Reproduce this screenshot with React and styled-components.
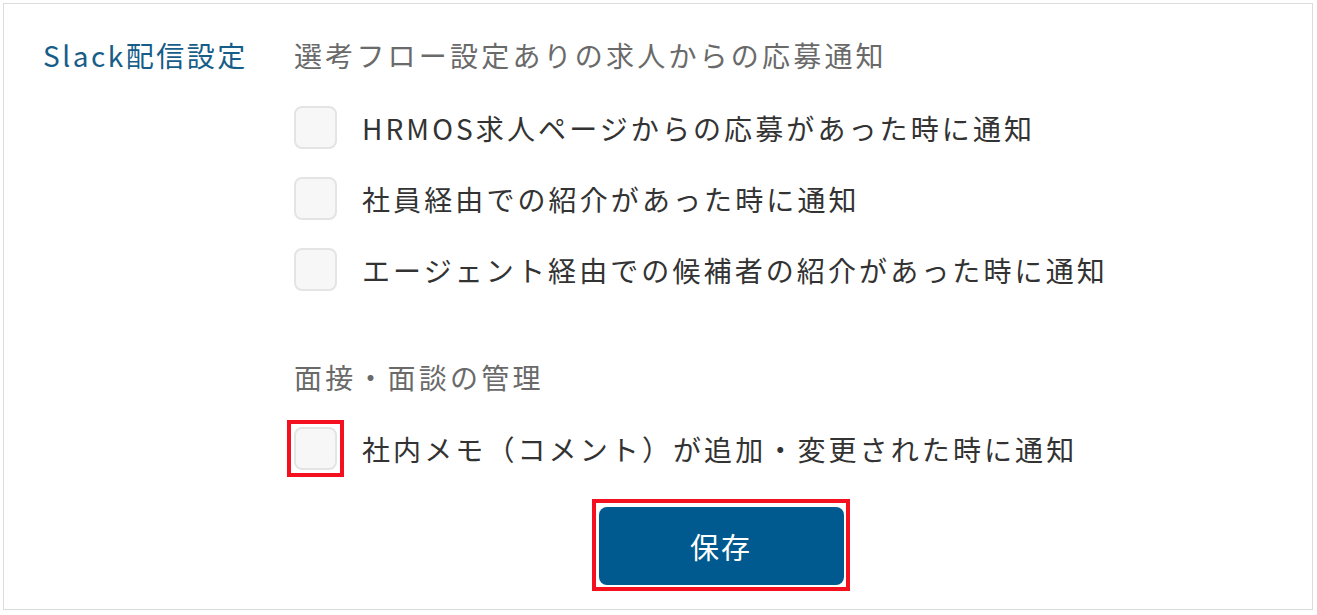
import React from "react";
import styled, { createGlobalStyle } from "styled-components";

const GlobalStyle = createGlobalStyle`
  html, body { margin: 0; padding: 0; background: #ffffff; }
  body { font-family: "Noto Sans CJK JP", "Noto Sans", sans-serif; }
`;

const Page = styled.div`
  padding: 3px 4px 0 3px;
  width: 1317px;
  box-sizing: border-box;
`;

const Panel = styled.section`
  border: 1px solid #dcdcdc;
  display: grid;
  grid-template-columns: 251px 853px;
  padding: 31px 0 24px 39px;
  height: 607px;
  box-sizing: border-box;
`;

const Label = styled.div`
  color: #175d88;
  font-size: 28px;
  line-height: 40px;
  letter-spacing: 2.5px;
  white-space: nowrap;
`;

const Content = styled.div`
  display: flex;
  flex-direction: column;
`;

const GroupTitle = styled.div`
  color: #6a6a6a;
  font-size: 28px;
  line-height: 40px;
  letter-spacing: 3.2px;
  margin-top: ${(p) => p.$top || 0}px;
  white-space: nowrap;
`;

const Options = styled.ul`
  list-style: none;
  margin: ${(p) => p.$top}px 0 0;
  padding: 0;
  display: flex;
  flex-direction: column;
  gap: 28px;
`;

const Option = styled.li`
  display: flex;
  align-items: center;
  gap: 25px;
  height: 43px;
`;

const Highlight = styled.span`
  flex: none;
  display: flex;
  margin: -7px;
  padding: 3px;
  border: 4px solid #f5101f;
`;

const Box = styled.span`
  flex: none;
  display: block;
  width: 43px;
  height: 43px;
  box-sizing: border-box;
  border: 2px solid #e4e4e4;
  border-radius: 8px;
  background: #f7f7f7;
`;

const OptionText = styled.span`
  color: #333333;
  font-size: 28px;
  letter-spacing: 3.1px;
  white-space: nowrap;
`;

const Actions = styled.div`
  display: flex;
  justify-content: center;
  margin-top: 29px;
`;

const ButtonHighlight = styled.div`
  display: flex;
  padding: 4px 2px 2px 3px;
  border: 4px solid #f5101f;
`;

const SaveButton = styled.button`
  width: 245px;
  height: 78px;
  border: none;
  border-radius: 8px;
  background: #005a90;
  color: #ffffff;
  font-family: "Noto Sans CJK JP", sans-serif;
  font-size: 29px;
  letter-spacing: 2px;
  cursor: pointer;
`;

const applyOptions = [
  "HRMOS求人ページからの応募があった時に通知",
  "社員経由での紹介があった時に通知",
  "エージェント経由での候補者の紹介があった時に通知",
];

export default function App() {
  return (
    <>
      <GlobalStyle />
      <Page>
        <Panel>
          <Label>Slack配信設定</Label>
          <Content>
            <GroupTitle>選考フロー設定ありの求人からの応募通知</GroupTitle>
            <Options $top={31}>
              {applyOptions.map((t) => (
                <Option key={t}>
                  <Box />
                  <OptionText>{t}</OptionText>
                </Option>
              ))}
            </Options>
            <GroupTitle $top={66}>面接・面談の管理</GroupTitle>
            <Options $top={30}>
              <Option>
                <Highlight>
                  <Box />
                </Highlight>
                <OptionText>社内メモ（コメント）が追加・変更された時に通知</OptionText>
              </Option>
            </Options>
            <Actions>
              <ButtonHighlight>
                <SaveButton>保存</SaveButton>
              </ButtonHighlight>
            </Actions>
          </Content>
        </Panel>
      </Page>
    </>
  );
}
